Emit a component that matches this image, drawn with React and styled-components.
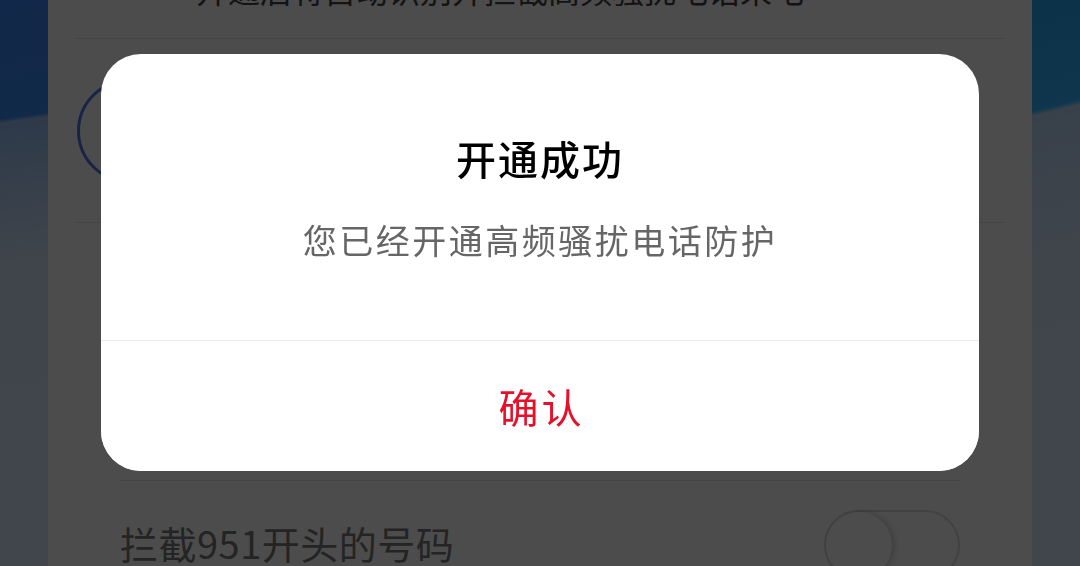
import styled, { createGlobalStyle } from "styled-components";

const GlobalStyle = createGlobalStyle`
  *, *::before, *::after {
    box-sizing: border-box;
  }
  html, body {
    margin: 0;
    padding: 0;
    height: 100%;
    overflow: hidden;
  }
  body {
    font-family: "Noto Sans CJK SC", "Noto Sans", sans-serif;
  }
`;

// background behind the page card, two blue strips with a slanted wave edge
const Screen = styled.div`
  height: 100vh;
  overflow: hidden;
  display: flex;
  justify-content: center;
  background:
    linear-gradient(172deg, #3f85f7 0, #3a8cf5 118px, #99c1f7 122px, #d4e6fc 260px, #dcecff 100%) left top / 48px 100% no-repeat,
    linear-gradient(166deg, #2aa6f5 0, #30b4ff 108px, #bcd8f9 113px, #d6e8fd 260px, #dbeaff 100%) right top / 48px 100% no-repeat,
    #dbeaff;
`;

const Page = styled.div`
  width: 984px;
  background: #fff;
  padding: 0 27px;
  display: flex;
  flex-direction: column;
  & > * {
    flex-shrink: 0;
  }
`;

const Intro = styled.div`
  margin-top: -33px;
  height: 72px;
  padding-right: 80px;
  font-size: 32px;
  line-height: 44px;
  text-align: center;
  color: #444;
  border-bottom: 1px solid #e6e6e6;
`;

const Feature = styled.div`
  height: 184px;
  display: flex;
  align-items: center;
  gap: 24px;
  border-bottom: 1px solid #e6e6e6;
`;

const Ring = styled.div`
  width: 104px;
  height: 104px;
  margin-left: 2px;
  border-radius: 50%;
  border: 3px solid #5577ee;
`;

const FeatureText = styled.div`
  font-size: 34px;
  color: #333;
`;

const Settings = styled.div`
  padding: 0 45px;
  display: flex;
  flex-direction: column;
  & > * {
    flex-shrink: 0;
  }
`;

const Row = styled.div`
  height: ${(p) => (p.$last ? "124px" : "129px")};
  display: flex;
  align-items: center;
  justify-content: space-between;
  border-bottom: ${(p) => (p.$last ? "none" : "1px solid #e3e3e3")};
`;

const Label = styled.span`
  font-size: 38px;
  line-height: 50px;
  letter-spacing: 0.5px;
  color: #7a7a7a;
`;

const Toggle = styled.div`
  width: 136px;
  height: 70px;
  margin-top: 4px;
  border-radius: 35px;
  border: 2px solid #dcdcdc;
  background: ${(p) => (p.$on ? "#3a6cf4" : "#fff")};
  display: flex;
  align-items: center;
  justify-content: ${(p) => (p.$on ? "flex-end" : "flex-start")};
`;

const Knob = styled.div`
  width: 66px;
  height: 66px;
  border-radius: 50%;
  background: #fff;
  box-shadow: 3px 0 6px rgba(0, 0, 0, 0.18);
`;

const Overlay = styled.div`
  position: fixed;
  inset: 0;
  background: rgba(0, 0, 0, 0.7);
`;

const Dialog = styled.div`
  position: fixed;
  top: 54px;
  left: 50%;
  transform: translateX(-50%);
  width: 878px;
  background: #fff;
  border-radius: 40px;
  overflow: hidden;
  display: flex;
  flex-direction: column;
`;

const DialogBody = styled.div`
  height: 286px;
  padding-top: 78px;
  display: flex;
  flex-direction: column;
  align-items: center;
  gap: 33px;
`;

const Title = styled.div`
  font-size: 40px;
  line-height: 52px;
  font-weight: 500;
  color: #000;
  letter-spacing: 2px;
`;

const Message = styled.div`
  font-size: 34px;
  line-height: 46px;
  letter-spacing: 2.5px;
  color: #666;
`;

const ConfirmButton = styled.button`
  height: 131px;
  border: none;
  border-top: 1px solid #ececec;
  background: #fff;
  font-family: inherit;
  font-size: 40px;
  letter-spacing: 3px;
  color: #e6102b;
  cursor: pointer;
  padding: 0 0 0 3px;
`;

export default function App() {
  return (
    <>
      <GlobalStyle />
      <Screen>
        <Page>
          <Intro>开通后将自动识别并拦截高频骚扰电话来电</Intro>
          <Feature>
            <Ring />
            <FeatureText>高频骚扰电话防护</FeatureText>
          </Feature>
          <Settings>
            <Row>
              <Label>拦截高频骚扰电话</Label>
              <Toggle $on>
                <Knob />
              </Toggle>
            </Row>
            <Row>
              <Label>拦截境外来电</Label>
              <Toggle>
                <Knob />
              </Toggle>
            </Row>
            <Row $last>
              <Label>拦截951开头的号码</Label>
              <Toggle>
                <Knob />
              </Toggle>
            </Row>
          </Settings>
        </Page>
      </Screen>
      <Overlay />
      <Dialog>
        <DialogBody>
          <Title>开通成功</Title>
          <Message>您已经开通高频骚扰电话防护</Message>
        </DialogBody>
        <ConfirmButton>确认</ConfirmButton>
      </Dialog>
    </>
  );
}
